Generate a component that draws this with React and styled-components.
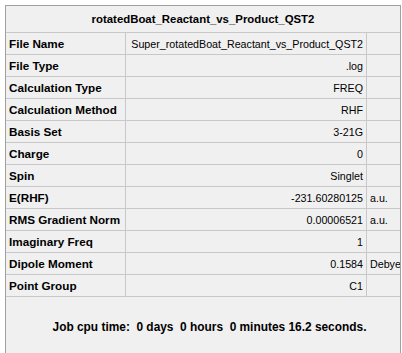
import React from 'react';
import styled, { createGlobalStyle } from 'styled-components';

const GlobalStyle = createGlobalStyle`
    html, body {
        margin : 0;
        padding : 0;
        background : #ffffff;
        overflow : hidden;
    }
`;

const Panel = styled.div`
    box-sizing : border-box;
    margin : 5px 0 0 5px;
    width : 396px;
    height : 348px;
    border : 1px solid #a0a0a0;
    border-bottom : none;
    background-color : #f0f0f0;
    font-family : 'Liberation Sans', Arial, sans-serif;
    font-size : 10.7px;
    color : #000;
    display : flex;
    flex-direction : column;
`;

const Header = styled.div`
    height : 26px;
    border-bottom : 1px solid #c8c8c8;
    display : flex;
    align-items : center;
    justify-content : center;
    font-weight : bold;
    font-size : 11.4px;
`;

const Row = styled.div`
    display : grid;
    grid-template-columns : 120px 241px 1fr;
    height : 21px;
    border-bottom : 1px solid #c8c8c8;
`;

const Cell = styled.div`
    display : flex;
    align-items : center;
    white-space : nowrap;
    overflow : hidden;
    border-right : ${props => props.last ? 'none' : '1px solid #c8c8c8'};
`;

const Label = styled(Cell)`
    font-weight : bold;
    font-size : 11.7px;
    padding-left : 3px;
`;

const Value = styled(Cell)`
    justify-content : flex-end;
    padding-right : 3px;
`;

const Unit = styled(Cell)`
    padding-left : 3px;
`;

const Footer = styled.div`
    flex : 1;
    padding : 23px 0 0 13px;
    text-align : center;
    font-weight : bold;
    font-size : 11.9px;
    white-space : pre;
`;

const rows = [
    ['File Name', 'Super_rotatedBoat_Reactant_vs_Product_QST2', ''],
    ['File Type', '.log', ''],
    ['Calculation Type', 'FREQ', ''],
    ['Calculation Method', 'RHF', ''],
    ['Basis Set', '3-21G', ''],
    ['Charge', '0', ''],
    ['Spin', 'Singlet', ''],
    ['E(RHF)', '-231.60280125', 'a.u.'],
    ['RMS Gradient Norm', '0.00006521', 'a.u.'],
    ['Imaginary Freq', '1', ''],
    ['Dipole Moment', '0.1584', 'Debye'],
    ['Point Group', 'C1', ''],
];

export default function App(){
    return(
        <>
            <GlobalStyle />
            <Panel>
                <Header>rotatedBoat_Reactant_vs_Product_QST2</Header>
                {rows.map(([label, value, unit]) => (
                    <Row key={label}>
                        <Label>{label}</Label>
                        <Value>{value}</Value>
                        <Unit last>{unit}</Unit>
                    </Row>
                ))}
                <Footer>{'Job cpu time:  0 days  0 hours  0 minutes 16.2 seconds.'}</Footer>
            </Panel>
        </>
    );
}
